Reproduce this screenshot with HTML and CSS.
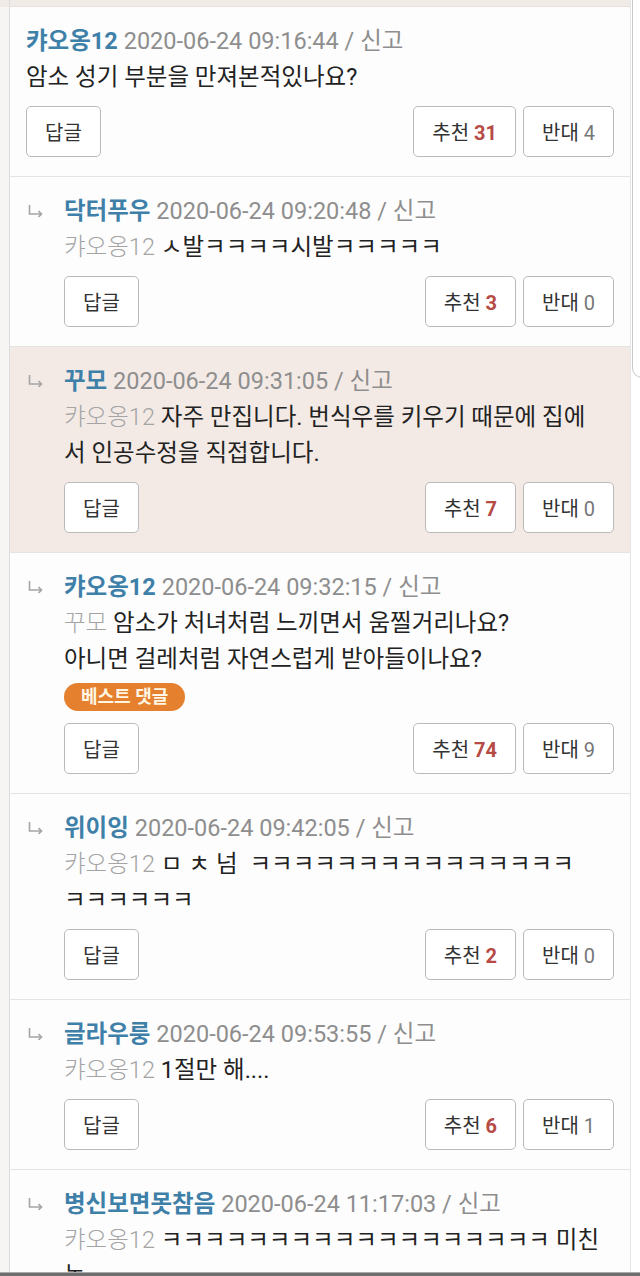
FILE: index.html
```html
<!DOCTYPE html>
<html lang="ko">

<head>
    <meta charset="UTF-8">
    <meta name="viewport" content="width=device-width, initial-scale=1.0">
    <title>댓글</title>
    <link rel="stylesheet" href="styles.css">
</head>

<body>

    <div class="screen">
        <div class="gutter"></div>
        <div class="board">
            <div class="prev"></div>

            <div class="comment">
                <div class="meta"><span class="name">캬오옹12</span> <span class="date">2020-06-24 09:16:44 / 신고</span></div>
                <p class="text">암소 성기 부분을 만져본적있나요?</p>
                <div class="actions">
                    <button class="btn btn-reply">답글</button>
                    <div class="votes">
                        <button class="btn">추천 <b class="up">31</b></button>
                        <button class="btn">반대 <span class="down">4</span></button>
                    </div>
                </div>
            </div>

            <div class="comment reply">
                <span class="arrow"><svg width="16" height="12" viewBox="0 0 16 12"><path d="M1.5 0v9h12M10.5 6l3 3-3 3" fill="none" stroke="#a5a5a5" stroke-width="1.6"/></svg></span>
                <div class="body">
                    <div class="meta"><span class="name">닥터푸우</span> <span class="date">2020-06-24 09:20:48 / 신고</span></div>
                    <p class="text"><span class="to">캬오옹12</span> ㅅ발ㅋㅋㅋㅋ시발ㅋㅋㅋㅋㅋ</p>
                    <div class="actions">
                        <button class="btn btn-reply">답글</button>
                        <div class="votes">
                            <button class="btn">추천 <b class="up">3</b></button>
                            <button class="btn">반대 <span class="down">0</span></button>
                        </div>
                    </div>
                </div>
            </div>

            <div class="comment reply mine">
                <span class="arrow"><svg width="16" height="12" viewBox="0 0 16 12"><path d="M1.5 0v9h12M10.5 6l3 3-3 3" fill="none" stroke="#a5a5a5" stroke-width="1.6"/></svg></span>
                <div class="body">
                    <div class="meta"><span class="name">꾸모</span> <span class="date">2020-06-24 09:31:05 / 신고</span></div>
                    <p class="text"><span class="to">캬오옹12</span> 자주 만집니다. 번식우를 키우기 때문에 집에<br>서 인공수정을 직접합니다.</p>
                    <div class="actions">
                        <button class="btn btn-reply">답글</button>
                        <div class="votes">
                            <button class="btn">추천 <b class="up">7</b></button>
                            <button class="btn">반대 <span class="down">0</span></button>
                        </div>
                    </div>
                </div>
            </div>

            <div class="comment reply">
                <span class="arrow"><svg width="16" height="12" viewBox="0 0 16 12"><path d="M1.5 0v9h12M10.5 6l3 3-3 3" fill="none" stroke="#a5a5a5" stroke-width="1.6"/></svg></span>
                <div class="body">
                    <div class="meta"><span class="name">캬오옹12</span> <span class="date">2020-06-24 09:32:15 / 신고</span></div>
                    <p class="text"><span class="to">꾸모</span> 암소가 처녀처럼 느끼면서 움찔거리나요?<br>아니면 걸레처럼 자연스럽게 받아들이나요?</p>
                    <span class="best">베스트 댓글</span>
                    <div class="actions">
                        <button class="btn btn-reply">답글</button>
                        <div class="votes">
                            <button class="btn">추천 <b class="up">74</b></button>
                            <button class="btn">반대 <span class="down">9</span></button>
                        </div>
                    </div>
                </div>
            </div>

            <div class="comment reply">
                <span class="arrow"><svg width="16" height="12" viewBox="0 0 16 12"><path d="M1.5 0v9h12M10.5 6l3 3-3 3" fill="none" stroke="#a5a5a5" stroke-width="1.6"/></svg></span>
                <div class="body">
                    <div class="meta"><span class="name">위이잉</span> <span class="date">2020-06-24 09:42:05 / 신고</span></div>
                    <p class="text"><span class="to">캬오옹12</span> <span class="jamo">ㅁㅊ넘</span> ㅋㅋㅋㅋㅋㅋㅋㅋㅋㅋㅋㅋㅋㅋㅋ<br>ㅋㅋㅋㅋㅋㅋ</p>
                    <div class="actions">
                        <button class="btn btn-reply">답글</button>
                        <div class="votes">
                            <button class="btn">추천 <b class="up">2</b></button>
                            <button class="btn">반대 <span class="down">0</span></button>
                        </div>
                    </div>
                </div>
            </div>

            <div class="comment reply">
                <span class="arrow"><svg width="16" height="12" viewBox="0 0 16 12"><path d="M1.5 0v9h12M10.5 6l3 3-3 3" fill="none" stroke="#a5a5a5" stroke-width="1.6"/></svg></span>
                <div class="body">
                    <div class="meta"><span class="name">글라우룽</span> <span class="date">2020-06-24 09:53:55 / 신고</span></div>
                    <p class="text"><span class="to">캬오옹12</span> 1절만 해....</p>
                    <div class="actions">
                        <button class="btn btn-reply">답글</button>
                        <div class="votes">
                            <button class="btn">추천 <b class="up">6</b></button>
                            <button class="btn">반대 <span class="down">1</span></button>
                        </div>
                    </div>
                </div>
            </div>

            <div class="comment reply">
                <span class="arrow"><svg width="16" height="12" viewBox="0 0 16 12"><path d="M1.5 0v9h12M10.5 6l3 3-3 3" fill="none" stroke="#a5a5a5" stroke-width="1.6"/></svg></span>
                <div class="body">
                    <div class="meta"><span class="name">병신보면못참음</span> <span class="date">2020-06-24 11:17:03 / 신고</span></div>
                    <p class="text"><span class="to">캬오옹12</span> ㅋㅋㅋㅋㅋㅋㅋㅋㅋㅋㅋㅋㅋㅋㅋㅋㅋㅋ 미친<br>놈</p>
                </div>
            </div>
        </div>
        <div class="rail">
            <div class="thumb"></div>
        </div>
    </div>
    <div class="edge"></div>

</body>

</html>
```

FILE: styles.css
```css
body {
    font-family: Roboto, 'Noto Sans CJK KR', sans-serif;
    background-color: #fff;
    margin: 0;
    padding: 0;
    height: 1276px;
    overflow: hidden;
    display: flex;
    flex-direction: column;
    color: #222;
}

.screen {
    flex: 1;
    display: flex;
    overflow: hidden;
}

.gutter {
    width: 9px;
    background-color: #f6f5f4;
    border-top: 7px solid #f1ebe7;
}

.board {
    width: 620px;
    border-left: 1px solid #dcdcdc;
    border-right: 1px solid #e4e4e4;
    background-color: #fdfdfd;
}

.prev {
    height: 6px;
    background-color: #f1ebe7;
    border-bottom: 1px solid #e6e1de;
}

.rail {
    position: relative;
    flex: 1;
    background-color: #fff;
}

.thumb {
    position: absolute;
    top: -2px;
    left: 1px;
    right: -4px;
    height: 378px;
    border: 1px solid #c9c9c9;
    border-radius: 0 0 0 10px;
    background-color: #fff;
}

.edge {
    height: 3px;
    background-color: #6e6e6e;
    border-top: 1px solid #aaa;
}

.comment {
    padding: 17px 16px 19px 16px;
    border-bottom: 1px solid #e4e4e4;
}

.reply {
    display: flex;
}

.reply .body {
    flex: 1;
}

.mine {
    background-color: #f3eae6;
}

.arrow {
    width: 38px;
    flex-shrink: 0;
    padding: 11px 0 0 2px;
    box-sizing: border-box;
}

.arrow svg {
    display: block;
}

.meta {
    font-size: 23.5px;
    line-height: 35px;
    white-space: nowrap;
}

.name {
    color: #3f80a9;
    font-weight: bold;
}

.date {
    color: #8e8e8e;
}

.text {
    margin: 0;
    font-size: 23.5px;
    line-height: 36px;
    color: #222;
    white-space: nowrap;
}

.to {
    color: #a4a4a4;
    font-weight: 300;
}

.jamo {
    letter-spacing: 6px;
}

.best {
    display: inline-block;
    margin: 6px 0 0;
    padding: 0 17px;
    height: 28px;
    line-height: 28px;
    border-radius: 14px;
    background-color: #e5802f;
    color: #fff6e4;
    font-size: 18px;
    font-weight: bold;
}

.best + .actions {
    margin-top: 12px;
}

.actions {
    display: flex;
    justify-content: space-between;
    margin-top: 11px;
}

.votes {
    display: flex;
    gap: 7px;
}

.btn {
    height: 51px;
    padding: 0 18px;
    background-color: #fff;
    border: 1px solid #bababa;
    border-radius: 5px;
    font-family: Roboto, 'Noto Sans CJK KR', sans-serif;
    font-size: 20px;
    color: #333;
}

.btn-reply {
    width: 75px;
    padding: 0;
}

.up {
    color: #b64a45;
}

.down {
    color: #777;
}
```
